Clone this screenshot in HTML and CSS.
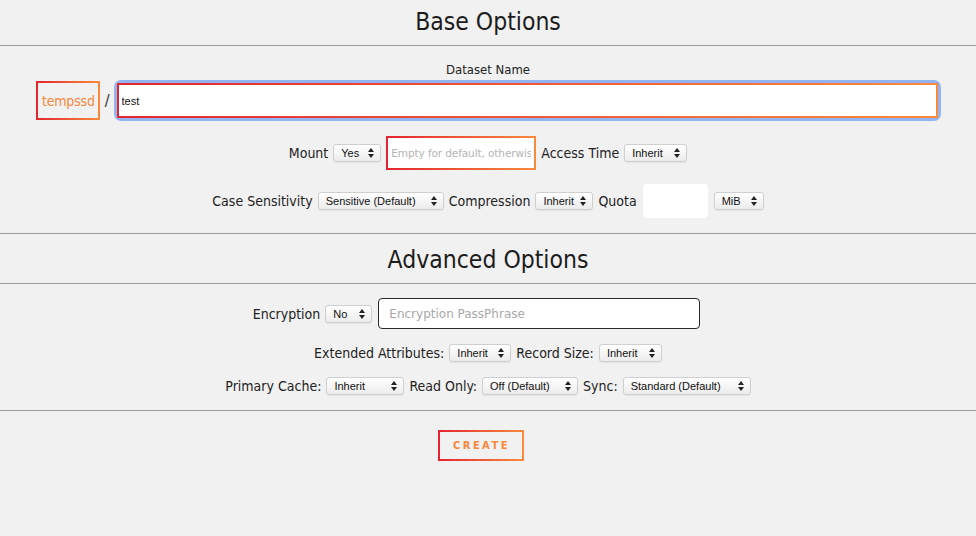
FILE: index.html
```html
<!DOCTYPE html>
<html lang="en">
<head>
  <meta charset="UTF-8" />
  <meta name="viewport" content="width=device-width, initial-scale=1.0"/>
  <title>Create Dataset</title>
  <link rel="stylesheet" href="styles.css">
</head>
<body>

  <form class="dataset-form">

    <h2 class="section-title">Base Options</h2>

    <div class="section">
      <label class="field-caption" for="dsName">Dataset Name</label>
      <div class="name-row">
        <span class="pool-name">tempssd</span>
        <span class="slash">/</span>
        <input type="text" id="dsName" class="name-input" value="test">
      </div>

      <div class="row mount-row">
        <label>Mount</label>
        <span class="select"><select style="width:48px"><option>Yes</option><option>No</option></select></span>
        <input type="text" class="mount-input" placeholder="Empty for default, otherwise a path">
        <label>Access Time</label>
        <span class="select"><select style="width:63px"><option>Inherit</option></select></span>
      </div>

      <div class="row">
        <label>Case Sensitivity</label>
        <span class="select"><select style="width:126px"><option>Sensitive (Default)</option></select></span>
        <label>Compression</label>
        <span class="select"><select style="width:58px"><option>Inherit</option></select></span>
        <label>Quota</label>
        <input type="text" class="quota-input">
        <span class="select"><select style="width:50px"><option>MiB</option></select></span>
      </div>
    </div>

    <h2 class="section-title advanced-title">Advanced Options</h2>

    <div class="section advanced">
      <div class="row enc-row">
        <label>Encryption</label>
        <span class="select"><select style="width:47px"><option>No</option></select></span>
        <input type="password" class="pass-input" placeholder="Encryption PassPhrase">
      </div>

      <div class="row small-row">
        <label>Extended Attributes:</label>
        <span class="select"><select style="width:62px"><option>Inherit</option></select></span>
        <label>Record Size:</label>
        <span class="select"><select style="width:63px"><option>Inherit</option></select></span>
      </div>

      <div class="row small-row">
        <label>Primary Cache:</label>
        <span class="select"><select style="width:78px"><option>Inherit</option></select></span>
        <label>Read Only:</label>
        <span class="select"><select style="width:96px"><option>Off (Default)</option></select></span>
        <label>Sync:</label>
        <span class="select"><select style="width:128px"><option>Standard (Default)</option></select></span>
      </div>
    </div>

    <div class="actions">
      <button type="button" class="create-btn">CREATE</button>
    </div>

  </form>

</body>
</html>
```

FILE: styles.css
```css
body {
  background-color: #f1f1f1;
  color: #222;
  font-family: 'DejaVu Sans Condensed', 'Liberation Sans', sans-serif;
  margin: 0;
}

.section-title {
  margin: 0;
  height: 45px;
  line-height: 44px;
  font-size: 24.5px;
  font-weight: normal;
  text-align: center;
  border-bottom: 1px solid #9c9c9c;
  color: #1c1c1c;
}

.advanced-title {
  height: 49px;
  line-height: 52px;
}

.section {
  border-bottom: 1px solid #9c9c9c;
  padding: 16px 0 15px;
}

.section.advanced {
  padding: 14px 0 15px;
}

.field-caption {
  display: block;
  text-align: center;
  font-size: 13px;
  line-height: 16px;
  margin-bottom: 3px;
}

.name-row {
  display: flex;
  align-items: center;
  padding: 0 38px 0 36px;
  gap: 4px;
}

.pool-name {
  box-sizing: border-box;
  height: 39px;
  padding: 0 3px 0 4px;
  display: flex;
  align-items: center;
  border: 2px solid;
  border-image: linear-gradient(to right, #e3262f, #f98a3c) 1;
  color: #f7873c;
  font-size: 14px;
  letter-spacing: -0.2px;
}

.slash {
  font-size: 16px;
  color: #333;
  margin: 0 3px 0 1px;
}

.name-input {
  flex: 1;
  box-sizing: border-box;
  height: 35px;
  padding: 0 3px;
  border: 2px solid;
  border-image: linear-gradient(to right, #e3262f, #f98a3c) 1;
  border-radius: 4px;
  box-shadow: 0 0 0 3px #92b5f1;
  background: #fff;
  font-family: 'Liberation Sans', sans-serif;
  font-size: 11px;
  color: #111;
  caret-color: #2f6fe0;
  outline: none;
}

.row {
  display: flex;
  justify-content: center;
  align-items: center;
  gap: 5px;
  font-size: 14px;
}

.mount-row {
  margin-top: 16px;
}

.mount-row + .row {
  margin-top: 14px;
}

.enc-row {
  padding-right: 23px;
}

.row label {
  white-space: nowrap;
}

.select {
  position: relative;
  display: inline-block;
  height: 18px;
}

.select select {
  appearance: none;
  -webkit-appearance: none;
  box-sizing: border-box;
  height: 18px;
  margin: 0;
  padding: 0 0 0 7px;
  border: 1px solid #cfcfcf;
  border-radius: 3px;
  background: linear-gradient(#ffffff, #ececec);
  font-family: 'Liberation Sans', sans-serif;
  font-size: 11px;
  color: #111;
  box-shadow: 0 1px 1px rgba(0, 0, 0, 0.06);
}

/* up/down arrows drawn with borders */
.select::before,
.select::after {
  content: '';
  position: absolute;
  right: 7px;
  width: 0;
  height: 0;
  border-left: 3px solid transparent;
  border-right: 3px solid transparent;
  pointer-events: none;
}

.select::before {
  top: 4px;
  border-bottom: 4px solid #222;
}

.select::after {
  top: 10px;
  border-top: 4px solid #222;
}

.mount-input {
  box-sizing: border-box;
  width: 150px;
  height: 34px;
  padding: 0 3px;
  border: 2px solid;
  border-image: linear-gradient(to right, #e3262f, #f98a3c) 1;
  background: #fff;
  font-family: 'DejaVu Sans', sans-serif;
  font-size: 10.5px;
  letter-spacing: -0.1px;
}

.mount-input::placeholder {
  color: #b4b4b4;
}

.quota-input {
  box-sizing: border-box;
  width: 65px;
  height: 34px;
  border: none;
  border-radius: 4px;
  background: #fff;
  margin: 0 1px;
}

.pass-input {
  box-sizing: border-box;
  width: 322px;
  height: 31px;
  margin-left: 1px;
  padding: 0 10px;
  border: 1px solid #2a2a2a;
  border-radius: 4px;
  background: #fff;
  font-family: 'DejaVu Sans', sans-serif;
  font-size: 12px;
}

.pass-input::placeholder {
  color: #a8a8a8;
}

.small-row {
  margin-top: 15px;
}

.small-row + .small-row {
  margin-top: 15px;
}

.actions {
  display: flex;
  justify-content: center;
  padding: 19px 15px 0 0;
}

.create-btn {
  box-sizing: border-box;
  width: 86px;
  height: 31px;
  padding: 0 0 0 2px;
  background: transparent;
  border: 2px solid;
  border-image: linear-gradient(to right, #e3262f, #f98a3c) 1;
  color: #f7873c;
  font-family: 'DejaVu Sans', sans-serif;
  font-size: 10px;
  font-weight: bold;
  letter-spacing: 2.4px;
  cursor: pointer;
}
```
